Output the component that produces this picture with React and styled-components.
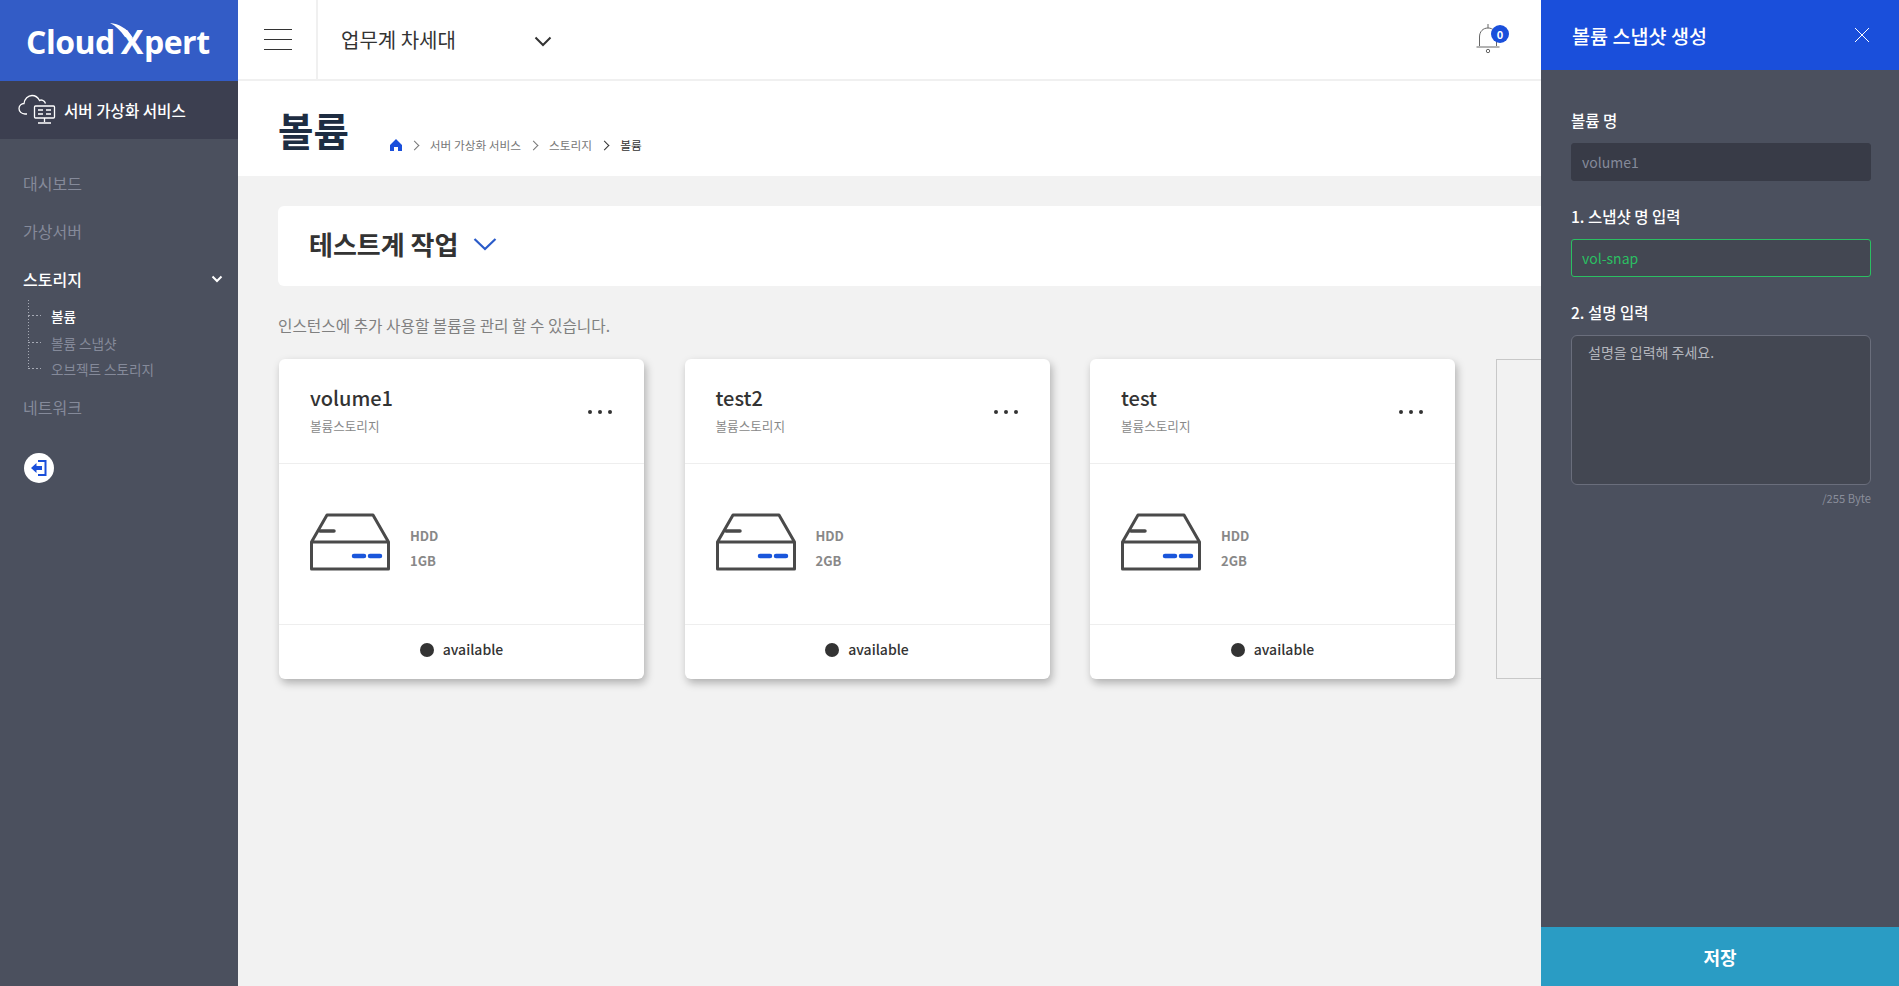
import styled, { createGlobalStyle } from "styled-components";

const GlobalStyle = createGlobalStyle`
  * { box-sizing: border-box; }
  html, body { margin: 0; height: 100%; }
  body {
    font-family: "Noto Sans CJK KR", "Noto Sans", sans-serif;
    background: #f2f2f2;
    color: #333;
    overflow: hidden;
  }
`;

const volumes = [
  { name: "volume1", size: "1GB" },
  { name: "test2", size: "2GB" },
  { name: "test", size: "2GB" },
];

const subMenu = [
  { label: "볼륨", active: true },
  { label: "볼륨 스냅샷" },
  { label: "오브젝트 스토리지" },
];

export default function App() {
  return (
    <Page>
      <GlobalStyle />
      <Sidebar>
        <Logo>
          <LogoText>
            Cloud
            <LogoX>
              X
              <Swoosh viewBox="0 0 24 16">
                <path d="M0 0C9 1 17 5 23 15L15 14C11 8 6 3 0 0Z" fill="#fff" />
              </Swoosh>
            </LogoX>
            pert
          </LogoText>
        </Logo>
        <ServiceBar>
          <CloudServerIcon />
          서버 가상화 서비스
        </ServiceBar>
        <Nav>
          <NavItem>대시보드</NavItem>
          <NavItem>가상서버</NavItem>
          <NavItem $open>
            스토리지
            <svg width="12" height="8" viewBox="0 0 12 8" fill="none">
              <path d="M1.5 1.5 6 6l4.5-4.5" stroke="#fff" strokeWidth="2" />
            </svg>
          </NavItem>
          <SubList>
            {subMenu.map((item) => (
              <SubItem key={item.label} $active={item.active}>{item.label}</SubItem>
            ))}
          </SubList>
          <NavItem>네트워크</NavItem>
        </Nav>
        <CollapseButton>
          <svg width="18" height="18" viewBox="0 0 18 18" fill="none">
            <path d="M8 2h7.5v14H8" stroke="#1a4fdb" strokeWidth="2" />
            <path d="M1 9l5.5-5v3H12v4H6.5v3L1 9Z" fill="#1a4fdb" />
          </svg>
        </CollapseButton>
      </Sidebar>

      <Main>
        <TopBar>
          <MenuButton>
            <span /><span /><span />
          </MenuButton>
          <GroupSelect>
            업무계 차세대
            <SelectArrow width="18" height="11" viewBox="0 0 18 11" fill="none">
              <path d="M1.5 1.5 9 9l7.5-7.5" stroke="#333" strokeWidth="2" />
            </SelectArrow>
          </GroupSelect>
          <Bell>
            <svg width="26" height="32" viewBox="0 0 26 32" fill="none" stroke="#666" strokeWidth="1">
              <path d="M12 1v4M3.5 23V14C3.5 8.5 7 5 12 5s8.5 3.5 8.5 9v9M0.5 24h23" />
              <circle cx="12" cy="28" r="1.7" />
            </svg>
            <Badge>0</Badge>
          </Bell>
        </TopBar>

        <TitleBand>
          <PageTitle>볼륨</PageTitle>
          <Breadcrumb>
            <svg width="12" height="12" viewBox="0 0 12 12">
              <path d="M6 0 12 6v6H8V8H4v4H0V6Z" fill="#1a4fdb" />
            </svg>
            <Crumb>서버 가상화 서비스</Crumb>
            <Crumb>스토리지</Crumb>
            <Crumb $current>볼륨</Crumb>
          </Breadcrumb>
        </TitleBand>

        <Content>
          <GroupBar>
            테스트계 작업
            <svg width="24" height="14" viewBox="0 0 24 14" fill="none">
              <path d="M1.5 2 12 12 22.5 2" stroke="#2a5bc9" strokeWidth="2.2" />
            </svg>
          </GroupBar>
          <Description>인스턴스에 추가 사용할 볼륨을 관리 할 수 있습니다.</Description>
          <CardRow>
            {volumes.map((v) => (
              <Card key={v.name}>
                <CardHead>
                  <div>
                    <CardTitle>{v.name}</CardTitle>
                    <CardSub>볼륨스토리지</CardSub>
                  </div>
                  <Dots><i /><i /><i /></Dots>
                </CardHead>
                <CardBody>
                  <HddIcon />
                  <Spec>
                    <span>HDD</span>
                    <span>{v.size}</span>
                  </Spec>
                </CardBody>
                <CardFoot>
                  <StatusDot />
                  available
                </CardFoot>
              </Card>
            ))}
            <GhostCard />
          </CardRow>
        </Content>
      </Main>

      <Panel>
        <PanelHead>
          볼륨 스냅샷 생성
          <svg width="16" height="16" viewBox="0 0 16 16" stroke="#fff" strokeWidth="1">
            <path d="M1 1l14 14M15 1 1 15" />
          </svg>
        </PanelHead>
        <PanelBody>
          <Label>볼륨 명</Label>
          <Field $variant="readonly" readOnly value="volume1" />
          <Label>1. 스냅샷 명 입력</Label>
          <Field $variant="valid" readOnly value="vol-snap" />
          <Label>2. 설명 입력</Label>
          <TextArea placeholder="설명을 입력해 주세요." />
          <ByteCount>/255 Byte</ByteCount>
        </PanelBody>
        <SaveButton>저장</SaveButton>
      </Panel>
    </Page>
  );
}

function CloudServerIcon() {
  return (
    <svg width="38" height="32" viewBox="0 0 38 32" fill="none" stroke="#fff" strokeWidth="1.3">
      <path d="M9 20H7C3.500 20 1 17.500 1 14.500S3.500 9.500 6 9.500C6.500 5 10 1.500 14 1.500c3.500 0 6 2 7.500 5 1.500-1 5-.5 6 3" />
      <rect x="16.500" y="12" width="20" height="12" rx="1" />
      <path d="M20 16h5M28 16h5M20 20h5M28 20h5M26.500 24v4M20 29h13" />
    </svg>
  );
}

function HddIcon() {
  return (
    <svg width="80" height="58" viewBox="0 0 80 58" fill="none">
      <path d="M1.500 29 17 2h46l15.500 27v27h-77V29Zm0 0h77" stroke="#4a4a4a" strokeWidth="3" strokeLinejoin="round" />
      <path d="M10 18h14" stroke="#4a4a4a" strokeWidth="3.500" strokeLinecap="round" />
      <path d="M44 43h10M60 43h10" stroke="#1a56db" strokeWidth="4.500" strokeLinecap="round" />
    </svg>
  );
}

const Page = styled.div`
  position: relative;
  display: flex;
  width: 100%;
  height: 100vh;
  overflow: hidden;
`;

const Sidebar = styled.aside`
  flex: 0 0 238px;
  background: #4b505e;
`;

const Logo = styled.div`
  height: 81px;
  background: #335cc6;
  display: flex;
  align-items: center;
  padding-left: 26px;
`;

const LogoText = styled.div`
  font-family: "Open Sans", sans-serif;
  font-weight: 700;
  font-size: 32px;
  letter-spacing: -0.5px;
  color: #fff;
`;

const LogoX = styled.span`
  position: relative;
  margin: 0 1px 0 6px;
  font-size: 34px;
`;

const Swoosh = styled.svg`
  position: absolute;
  left: -11px;
  top: 5px;
  width: 24px;
  height: 16px;
`;

const ServiceBar = styled.div`
  height: 58px;
  background: #3c3f50;
  display: flex;
  align-items: center;
  gap: 8px;
  padding-left: 18px;
  font-size: 15.6px;
  font-weight: 500;
  color: #fff;
`;

const Nav = styled.nav`
  padding: 20px 15px 0 23px;
`;

const NavItem = styled.div`
  height: 48px;
  display: flex;
  align-items: center;
  justify-content: space-between;
  font-size: 16px;
  color: ${(p) => (p.$open ? "#fff" : "#858a9a")};
  font-weight: ${(p) => (p.$open ? 500 : 400)};
`;

const SubList = styled.ul`
  list-style: none;
  margin: 0 0 0 5px;
  padding: 0;
`;

const SubItem = styled.li`
  position: relative;
  height: 26.5px;
  line-height: 26.5px;
  padding-left: 23px;
  font-size: 13.6px;
  font-weight: ${(p) => (p.$active ? 500 : 400)};
  color: ${(p) => (p.$active ? "#fff" : "#858a9a")};

  /* dotted tree lines */
  &::before {
    content: "";
    position: absolute;
    left: 0;
    top: -3px;
    height: 16px;
    width: 13px;
    background:
      repeating-linear-gradient(to bottom, #a6aab5 0 1px, transparent 1px 3px) left top / 1px 100% no-repeat,
      repeating-linear-gradient(to right, #a6aab5 0 2px, transparent 2px 4px) left bottom / 100% 1px no-repeat;
  }
  &:nth-child(n + 2)::before {
    top: -14px;
    height: 27px;
  }
`;

const CollapseButton = styled.div`
  width: 30px;
  height: 30px;
  margin: 22px 0 0 24px;
  border-radius: 50%;
  background: #fff;
  display: flex;
  align-items: center;
  justify-content: center;
`;

const Main = styled.main`
  flex: 1;
  min-width: 0;
`;

const TopBar = styled.header`
  height: 81px;
  background: #fff;
  border-bottom: 2px solid #f0f0f0;
  display: flex;
  align-items: center;
`;

const MenuButton = styled.div`
  width: 80px;
  height: 100%;
  border-right: 2px solid #f0f0f0;
  display: flex;
  flex-direction: column;
  justify-content: center;
  gap: 9px;
  padding-left: 26px;

  span {
    width: 28px;
    height: 1px;
    background: #333;
  }
`;

const GroupSelect = styled.div`
  width: 234px;
  padding-left: 23px;
  display: flex;
  align-items: center;
  justify-content: space-between;
  font-size: 20px;
  color: #333;
`;

const SelectArrow = styled.svg`
  margin-top: 4px;
`;

const Bell = styled.div`
  position: relative;
  margin-left: 924px;
  padding-top: 4px;
`;

const Badge = styled.span`
  position: absolute;
  left: 15px;
  top: 6px;
  width: 18px;
  height: 18px;
  border-radius: 50%;
  background: #1a4fdb;
  color: #fff;
  font-size: 11px;
  font-weight: 700;
  line-height: 18px;
  text-align: center;
`;

const TitleBand = styled.div`
  height: 95px;
  background: #fff;
  display: flex;
  align-items: center;
  padding: 0 0 0 40px;
`;

const PageTitle = styled.h1`
  margin: 0 41px 0 0;
  font-size: 38.5px;
  font-weight: 700;
  color: #1e2d42;
  line-height: 1;
  position: relative;
  top: 1px;
`;

const Breadcrumb = styled.div`
  display: flex;
  align-items: center;
  padding-top: 32px;
`;

const Crumb = styled.span`
  font-size: 11.7px;
  color: ${(p) => (p.$current ? "#333" : "#777")};

  &::before {
    content: "";
    display: inline-block;
    width: 6px;
    height: 6px;
    margin: 0 12px 1px 9px;
    border-top: 1px solid ${(p) => (p.$current ? "#333" : "#777")};
    border-right: 1px solid ${(p) => (p.$current ? "#333" : "#777")};
    transform: rotate(45deg);
  }
`;

const Content = styled.div`
  padding: 30px 0 0 40px;
`;

const GroupBar = styled.div`
  height: 80px;
  background: #fff;
  border-radius: 6px;
  display: flex;
  align-items: center;
  gap: 15px;
  padding: 0 0 5px 31px;
  font-size: 26px;
  font-weight: 700;
  color: #333;
`;

const Description = styled.p`
  margin: 28px 0 21px;
  height: 24px;
  line-height: 24px;
  font-size: 15.7px;
  color: #808080;
`;

const CardRow = styled.div`
  display: flex;
  gap: 40.5px;
  padding-left: 1px;
`;

const Card = styled.article`
  flex: 0 0 365px;
  height: 320px;
  background: #fff;
  border-radius: 6px;
  box-shadow: 2px 4px 8px rgba(0, 0, 0, 0.28);
  display: flex;
  flex-direction: column;
`;

const GhostCard = styled.div`
  flex: 0 0 100px;
  height: 320px;
  border: 1px solid #c8c8c8;
`;

const CardHead = styled.div`
  height: 105px;
  padding: 22px 31px 0;
  border-bottom: 1px solid #eee;
  display: flex;
  justify-content: space-between;
  align-items: flex-start;
`;

const CardTitle = styled.div`
  font-size: 20px;
  font-weight: 500;
  line-height: 34px;
  color: #333;
`;

const CardSub = styled.div`
  font-size: 12.6px;
  line-height: 22px;
  color: #888;
`;

const Dots = styled.div`
  display: flex;
  gap: 6px;
  margin: 29px 1px 0 0;

  i {
    width: 4px;
    height: 4px;
    border-radius: 50%;
    background: #333;
  }
`;

const CardBody = styled.div`
  flex: 1;
  display: flex;
  align-items: center;
  gap: 20px;
  padding: 0 0 4px 31px;
`;

const Spec = styled.div`
  display: flex;
  flex-direction: column;
  gap: 5px;
  padding-top: 12px;
  font-size: 13px;
  font-weight: 700;
  line-height: 20px;
  color: #888;
`;

const CardFoot = styled.div`
  height: 55px;
  border-top: 1px solid #eee;
  display: flex;
  align-items: center;
  justify-content: center;
  gap: 9px;
  padding-bottom: 7px;
  font-size: 14px;
  font-weight: 500;
  color: #333;
`;

const StatusDot = styled.span`
  width: 14px;
  height: 14px;
  border-radius: 50%;
  background: #333;
  margin-top: 2px;
`;

const Panel = styled.section`
  position: absolute;
  top: 0;
  right: 0;
  bottom: 0;
  width: 358px;
  background: #4b505e;
  display: flex;
  flex-direction: column;
`;

const PanelHead = styled.div`
  height: 70px;
  background: #1a4fdb;
  display: flex;
  align-items: center;
  justify-content: space-between;
  padding: 0 29px 0 31px;
  font-size: 19.6px;
  font-weight: 500;
  color: #fff;
`;

const PanelBody = styled.div`
  flex: 1;
  display: flex;
  flex-direction: column;
  padding: 37px 28px 0 30px;
`;

const Label = styled.label`
  height: 36px;
  font-size: 15.5px;
  font-weight: 500;
  line-height: 26px;
  color: #fff;
`;

const Field = styled.input`
  height: 38px;
  margin-bottom: 22px;
  padding: 0 10px;
  border-radius: 3px;
  outline: none;
  font: inherit;
  font-size: 14px;
  border: 1px solid ${(p) => (p.$variant === "valid" ? "#2bbf62" : "#383b47")};
  background: ${(p) => (p.$variant === "valid" ? "#434752" : "#383b47")};
  color: ${(p) => (p.$variant === "valid" ? "#2bbf62" : "#858a9a")};
`;

const TextArea = styled.textarea`
  height: 150px;
  padding: 6px 16px;
  border: 1px solid #6a6e7c;
  border-radius: 6px;
  outline: none;
  resize: none;
  background: #434752;
  font: inherit;
  font-size: 14px;

  &::placeholder {
    color: #b4b6bd;
    opacity: 1;
  }
`;

const ByteCount = styled.div`
  margin-top: 5px;
  text-align: right;
  font-size: 11.2px;
  color: #8a8e9b;
`;

const SaveButton = styled.div`
  height: 59px;
  background: #2a9cc4;
  display: flex;
  align-items: center;
  justify-content: center;
  font-size: 18px;
  font-weight: 700;
  color: #fff;
`;
